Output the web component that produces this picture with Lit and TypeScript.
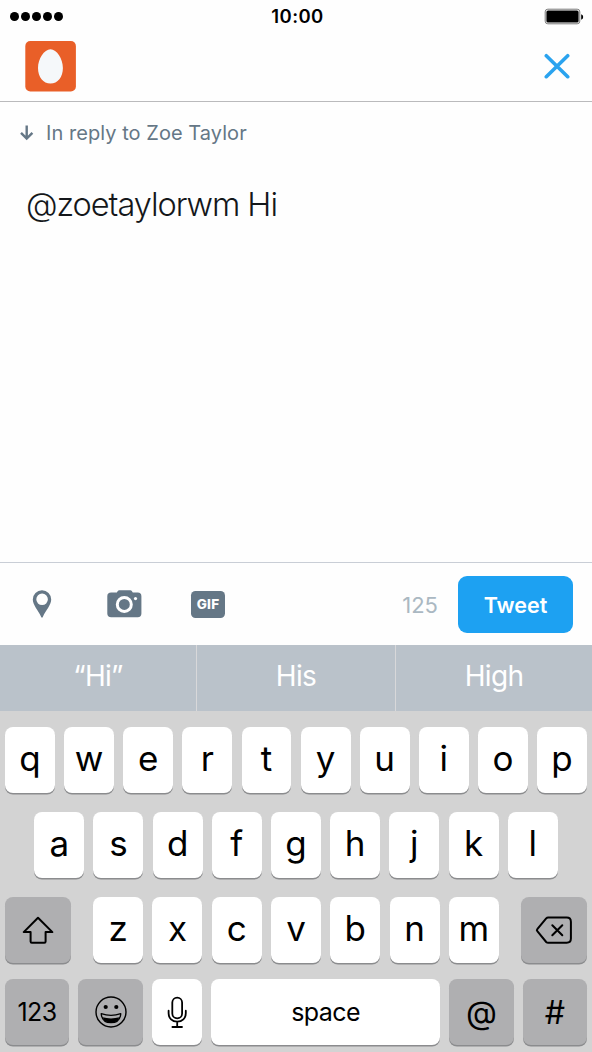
import { LitElement, html, css } from "lit";

const icons = {
  battery: html`<svg width="40" height="18" viewBox="0 0 40 18">
    <rect x="1.2" y="1.2" width="34.6" height="14.6" rx="2.6" fill="#fff" stroke="#777" stroke-width="1" />
    <rect x="2.4" y="2.4" width="32.2" height="12.2" rx="1.6" />
    <path d="M37.2 6.2q2 .5 2 2.8t-2 2.8z" />
  </svg>`,
  egg: html`<svg width="51" height="51" viewBox="0 0 51 51">
    <rect x=".3" y="0" width="50.6" height="50.4" rx="5" fill="#e95f28" />
    <path d="M25.5 8.3c6.3 0 12.4 9.6 12.4 18.6 0 9-5.2 15.6-12.4 15.6S13 35.9 13 26.9c0-9 6.2-18.6 12.5-18.6z" fill="#f5f8fa" />
  </svg>`,
  close: html`<svg width="26" height="26" viewBox="0 0 26 26" fill="none" stroke="#2aa3ef" stroke-width="3.6" stroke-linecap="round">
    <path d="M2.3 2.7l21.4 21M23.700 2.700l-21.400 21" />
  </svg>`,
  arrow: html`<svg width="14" height="16" viewBox="0 0 14 16" fill="none" stroke="#657786" stroke-width="2.4">
    <path d="M6.7 .4v13.2M1 7.800l5.700 5.800 5.700-5.800" />
  </svg>`,
  pin: html`<svg width="20" height="28" viewBox="0 0 20 28">
    <path fill="#657786" fill-rule="evenodd" d="M10 .3a9.2 9.2 0 0 1 9.2 9.3c0 5.500-5.200 10.400-8.400 17.300q-.8 1.500-1.600 0C6 20 .8 15.100.8 9.600A9.200 9.200 0 0 1 10 .3zm.1 3.200a5.800 5.800 0 1 0 0 11.600 5.800 5.800 0 0 0 0-11.600z" />
  </svg>`,
  camera: html`<svg width="35" height="28" viewBox="0 0 35 28">
    <path fill="#657786" d="M4.2 2.600h5.600l1-1.600q.5-.8 1.500-.8h11q1 0 1.500.8l1 1.600h4.900q3.700 0 3.700 3.700v17.300q0 3.700-3.700 3.700H4.200Q.3 27.300.3 23.600V6.300q0-3.700 3.900-3.700z" />
    <circle cx="17.3" cy="14.4" r="7" fill="none" stroke="#fff" stroke-width="3" />
    <circle cx="28.5" cy="8.6" r="1.6" fill="#fff" />
  </svg>`,
  shift: html`<svg width="32" height="28" viewBox="0 0 32 28" fill="none" stroke="#000" stroke-width="2" stroke-linejoin="round">
    <path d="M16 1.800L30.400 16.100h-6.800v9.500q0 1.200-1.200 1.200H9.800q-1.200 0-1.200-1.200v-9.500H1.700z" />
  </svg>`,
  backspace: html`<svg width="38" height="28" viewBox="0 0 38 28" fill="none" stroke="#000" stroke-width="2" stroke-linejoin="round" stroke-linecap="round">
    <path d="M13.200 1.600h18.500q4.200 0 4.200 4.200v16.800q0 4.200-4.200 4.200H13.200q-1.200 0-2-.8L2.300 15.200q-.9-1 0-2L11.200 2.400q.8-.8 2-.8z" />
    <path d="M17.300 9.200l10 10M27.300 9.200l-10 10" />
  </svg>`,
  emoji: html`<svg width="34" height="34" viewBox="0 0 34 34">
    <circle cx="17" cy="17" r="15" fill="none" stroke="#000" stroke-width="1.4" />
    <circle cx="11.7" cy="12" r="2.1" />
    <circle cx="22.3" cy="12" r="2.1" />
    <path d="M7.200 18.700q9.800 3.200 19.600 0-.8 9-9.800 9t-9.800-9z" fill="none" stroke="#000" stroke-width="1.3" stroke-linejoin="round" />
    <path d="M8.500 22.300q8.500 2.200 17 0-2 5.400-8.500 5.400t-8.500-5.400z" />
  </svg>`,
  mic: html`<svg width="22" height="32" viewBox="0 0 22 32" fill="none" stroke="#000" stroke-width="1.8" stroke-linecap="round">
    <rect x="6.3" y="1.7" width="9.8" height="20.6" rx="4.9" />
    <path d="M2.600 14.700v2.600c0 5 3.600 8.300 8.600 8.300s8.600-3.300 8.600-8.300v-2.600M11.200 25.600v5M6.400 31h9.600" />
  </svg>`,
};

export class KeyboardKey extends LitElement {
  static get properties() {
    return {
      label: { type: String },
      icon: { type: String },
    };
  }

  static get styles() {
    return css`
      :host {
        display: flex;
        align-items: center;
        justify-content: center;
        box-sizing: border-box;
        height: 66px;
        padding-bottom: 4px;
        border-radius: 8px;
        background: #fff;
        box-shadow: 0 1.5px 0 #8b8c8e;
        color: #000;
        font-size: 35px;
        font-weight: 400;
      }

      :host([dark]) {
        background: #afafb1;
      }

      :host([icon]) {
        padding-bottom: 0;
      }

      :host([small]) {
        padding-bottom: 1px;
        font-size: 25px;
        letter-spacing: -0.6px;
      }

      :host([symbol]) {
        padding-bottom: 0;
        font-size: 32px;
      }

      svg {
        display: block;
      }
    `;
  }

  render() {
    return this.icon ? icons[this.icon] : html`<span>${this.label}</span>`;
  }
}

customElements.define("keyboard-key", KeyboardKey);

export class AppRoot extends LitElement {
  constructor() {
    super();
    this.text = "@zoetaylorwm Hi";
    this.replyTo = "Zoe Taylor";
    this.remaining = 125;
    this.suggestions = ["“Hi”", "His", "High"];
  }

  static get properties() {
    return {
      text: { type: String },
      replyTo: { type: String },
      remaining: { type: Number },
      suggestions: { type: Array },
    };
  }

  static get styles() {
    return css`
      :host {
        display: flex;
        flex-direction: column;
        width: 592px;
        height: 1052px;
        overflow: hidden;
        background: #fefefe;
        font-family: Inter, "Liberation Sans", sans-serif;
      }

      svg {
        display: block;
      }

      .status {
        display: grid;
        grid-template-columns: 1fr auto 1fr;
        align-items: center;
        height: 33px;
        padding: 0 8px 0 10px;
      }

      .signal {
        display: flex;
        gap: 2.2px;
      }

      .signal i {
        width: 8.9px;
        height: 8.9px;
        border-radius: 50%;
        background: #000;
      }

      .time {
        padding: 0 0 2px 1px;
        font-size: 18.5px;
        font-weight: 600;
        letter-spacing: 0.4px;
      }

      .battery {
        justify-self: end;
      }

      .header {
        display: flex;
        align-items: center;
        justify-content: space-between;
        box-sizing: border-box;
        height: 69px;
        padding: 0 22px 2px 25px;
        border-bottom: 1px solid #bababc;
      }

      .reply {
        display: flex;
        align-items: center;
        gap: 12px;
        height: 62px;
        padding-left: 20px;
        color: #657786;
        font-size: 20px;
        letter-spacing: 0.05px;
      }

      .compose {
        flex: 1;
        padding: 21px 26px;
        color: #14171a;
        font-size: 32.5px;
        font-weight: 300;
        letter-spacing: -1.05px;
        line-height: 40px;
      }

      .toolbar {
        display: flex;
        align-items: center;
        box-sizing: border-box;
        height: 83px;
        padding: 0 19px 0 32px;
        border-top: 1px solid #c9ced6;
      }

      .camera {
        margin-left: 55px;
      }

      .gif {
        display: flex;
        align-items: center;
        justify-content: center;
        width: 34px;
        height: 27px;
        margin-left: 49px;
        border-radius: 4.5px;
        background: #657786;
        color: #fff;
        font-size: 13.5px;
        font-weight: 800;
        letter-spacing: 0.2px;
      }

      .count {
        margin-left: auto;
        padding-top: 2px;
        color: #aab8c2;
        font-size: 22px;
      }

      .tweet {
        width: 115px;
        height: 57px;
        margin-left: 20px;
        padding: 2px 0 0;
        border: none;
        border-radius: 9px;
        background: #1da1f2;
        color: #fff;
        font: inherit;
        font-size: 21.5px;
        font-weight: 600;
      }

      .suggestions {
        display: grid;
        grid-template-columns: 196px 198px 1fr;
        gap: 1px;
        height: 66px;
        background: #d8d8da;
      }

      .suggestions span {
        display: flex;
        align-items: center;
        justify-content: center;
        padding-bottom: 4px;
        background: #bac2ca;
        color: #fff;
        font-size: 28px;
        font-weight: 400;
        letter-spacing: -0.7px;
      }

      .keyboard {
        box-sizing: border-box;
        height: 341px;
        padding: 16px 5px 0;
        background: #d3d3d3;
      }

      .row {
        display: grid;
        grid-template-columns: repeat(10, 1fr);
        column-gap: 9.25px;
        margin-bottom: 19px;
      }

      .middle {
        grid-template-columns: repeat(9, 1fr);
        padding: 0 29.3px;
      }

      .lower {
        grid-template-columns: 66px 1fr 66px;
        column-gap: 22.2px;
        margin-bottom: 16px;
      }

      .letters {
        display: grid;
        grid-template-columns: repeat(7, 1fr);
        column-gap: 9.25px;
      }

      .bottom {
        grid-template-columns: 64px 64.7px 49.9px 1fr 64.7px 64px;
      }
    `;
  }

  renderLetters(letters) {
    return letters.split("").map((l) => html`<keyboard-key label=${l}></keyboard-key>`);
  }

  render() {
    return html`
      <div class="status">
        <div class="signal"><i></i><i></i><i></i><i></i><i></i></div>
        <div class="time">10:00</div>
        <div class="battery">${icons.battery}</div>
      </div>
      <div class="header">${icons.egg} ${icons.close}</div>
      <div class="reply">${icons.arrow}<span>In reply to ${this.replyTo}</span></div>
      <div class="compose">${this.text}</div>
      <div class="toolbar">
        ${icons.pin}
        <div class="camera">${icons.camera}</div>
        <div class="gif">GIF</div>
        <div class="count">${this.remaining}</div>
        <button class="tweet">Tweet</button>
      </div>
      <div class="suggestions">${this.suggestions.map((s) => html`<span>${s}</span>`)}</div>
      <div class="keyboard">
        <div class="row">${this.renderLetters("qwertyuiop")}</div>
        <div class="row middle">${this.renderLetters("asdfghjkl")}</div>
        <div class="row lower">
          <keyboard-key dark icon="shift"></keyboard-key>
          <div class="letters">${this.renderLetters("zxcvbnm")}</div>
          <keyboard-key dark icon="backspace"></keyboard-key>
        </div>
        <div class="row bottom">
          <keyboard-key dark small label="123"></keyboard-key>
          <keyboard-key dark icon="emoji"></keyboard-key>
          <keyboard-key icon="mic"></keyboard-key>
          <keyboard-key small label="space"></keyboard-key>
          <keyboard-key dark symbol label="@"></keyboard-key>
          <keyboard-key dark symbol label="#"></keyboard-key>
        </div>
      </div>
    `;
  }
}

customElements.define("app-root", AppRoot);
